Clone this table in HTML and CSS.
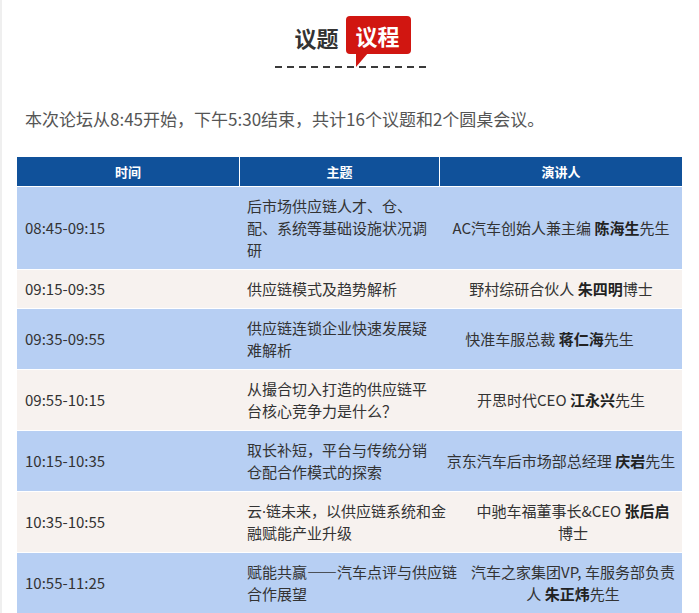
FILE: index.html
```html
<!DOCTYPE html>
<html lang="zh-CN">
<head>
<meta charset="utf-8">
<title>议题议程</title>
<link rel="stylesheet" href="styles.css">
</head>
<body>
<div class="page">
  <div class="title">
    <span class="title-plain">议题</span>
    <span class="badge">议程</span>
  </div>
  <div class="dash"></div>
  <p class="intro">本次论坛从8:45开始，下午5:30结束，共计16个议题和2个圆桌会议。</p>
  <table class="agenda">
    <colgroup>
      <col class="c-time">
      <col class="c-topic">
      <col class="c-speaker">
    </colgroup>
    <thead>
      <tr><th>时间</th><th>主题</th><th class="last">演讲人</th></tr>
    </thead>
    <tbody>
      <tr class="blue">
        <td class="time">08:45-09:15</td>
        <td class="topic">后市场供应链人才、仓、<br>配、系统等基础设施状况调<br>研</td>
        <td class="speaker">AC汽车创始人兼主编 <b>陈海生</b>先生</td>
      </tr>
      <tr class="beige">
        <td class="time">09:15-09:35</td>
        <td class="topic">供应链模式及趋势解析</td>
        <td class="speaker">野村综研合伙人 <b>朱四明</b>博士</td>
      </tr>
      <tr class="blue left-shift">
        <td class="time">09:35-09:55</td>
        <td class="topic">供应链连锁企业快速发展疑<br>难解析</td>
        <td class="speaker">快准车服总裁 <b>蒋仁海</b>先生</td>
      </tr>
      <tr class="beige">
        <td class="time">09:55-10:15</td>
        <td class="topic">从撮合切入打造的供应链平<br>台核心竞争力是什么？</td>
        <td class="speaker">开思时代CEO <b>江永兴</b>先生</td>
      </tr>
      <tr class="blue">
        <td class="time">10:15-10:35</td>
        <td class="topic">取长补短，平台与传统分销<br>仓配合作模式的探索</td>
        <td class="speaker">京东汽车后市场部总经理 <b>庆岩</b>先生</td>
      </tr>
      <tr class="beige right-shift">
        <td class="time">10:35-10:55</td>
        <td class="topic">云<span class="dot">·</span>链未来，以供应链系统和金<br>融赋能产业升级</td>
        <td class="speaker">中驰车福董事长&amp;CEO <b>张后启</b><br>博士</td>
      </tr>
      <tr class="blue right-shift">
        <td class="time">10:55-11:25</td>
        <td class="topic">赋能共赢——汽车点评与供应链<br>合作展望</td>
        <td class="speaker">汽车之家集团VP, 车服务部负责<br>人 <b>朱正炜</b>先生</td>
      </tr>
    </tbody>
  </table>
</div>
</body>
</html>
```

FILE: styles.css
```css
html, body {
  margin: 0;
  padding: 0;
  background: #ffffff;
}

body {
  border-left: 2px solid #efefef;
  min-height: 100vh;
  box-sizing: border-box;
  font-family: "Noto Sans CJK SC", "Noto Sans", sans-serif;
  color: #333333;
}

.page {
  padding-top: 16px;
}

.title {
  display: flex;
  justify-content: center;
  align-items: center;
  gap: 7px;
  height: 38px;
  padding-left: 4px;
}

.title-plain {
  font-size: 22px;
  font-weight: bold;
  color: #333333;
  line-height: 38px;
  padding-top: 3px;
}

.badge {
  position: relative;
  display: block;
  height: 38px;
  line-height: 38px;
  padding: 0 11px 0 10px;
  background: #d11611;
  color: #ffffff;
  font-size: 22px;
  font-weight: bold;
  border-radius: 4px;
}

.badge::after {
  content: "";
  position: absolute;
  left: 10px;
  top: 37px;
  width: 0;
  height: 0;
  border-right: 12px solid transparent;
  border-top: 14px solid #d11611;
}

.dash {
  width: 151px;
  height: 2px;
  margin: 12px auto 0;
  background: repeating-linear-gradient(to right, #3a3a3a 0, #3a3a3a 7px, transparent 7px, transparent 12px);
}

.intro {
  margin: 38px 0 0 23px;
  font-size: 17px;
  line-height: 26px;
  color: #555555;
}

.agenda {
  margin: 25px 0 0 15px;
  border-collapse: separate;
  border-spacing: 0;
  table-layout: fixed;
  width: 665px;
}

.c-time { width: 223px; }
.c-topic { width: 200px; }
.c-speaker { width: 242px; }

.agenda th {
  background: #10519a;
  color: #ffffff;
  font-size: 13px;
  font-weight: bold;
  height: 30px;
  line-height: 29px;
  padding: 0;
  text-align: center;
  border-right: 1px solid #ffffff;
  border-bottom: 1px solid #ffffff;
  box-sizing: border-box;
}

.agenda th.last {
  border-right: 0;
}

.agenda td {
  font-size: 15px;
  line-height: 22px;
  padding: 8px 0;
  vertical-align: middle;
  color: #333333;
  white-space: nowrap;
  border-bottom: 1px solid #ffffff;
}

.agenda b {
  font-weight: bold;
  color: #222222;
}

.dot {
  font-family: "Noto Sans", sans-serif;
}

.blue td { background: #b7cff3; }
.beige td { background: #f7f2ef; }

.agenda td.time {
  padding-left: 8px;
  text-align: left;
}

.agenda td.topic {
  padding-left: 7px;
  text-align: left;
}

.agenda td.speaker {
  text-align: center;
  padding-left: 6px;
  padding-right: 6px;
}

.agenda .right-shift td.speaker {
  padding-left: 30px;
  padding-right: 6px;
}

.agenda .left-shift td.speaker {
  padding-left: 6px;
  padding-right: 29px;
}
```
